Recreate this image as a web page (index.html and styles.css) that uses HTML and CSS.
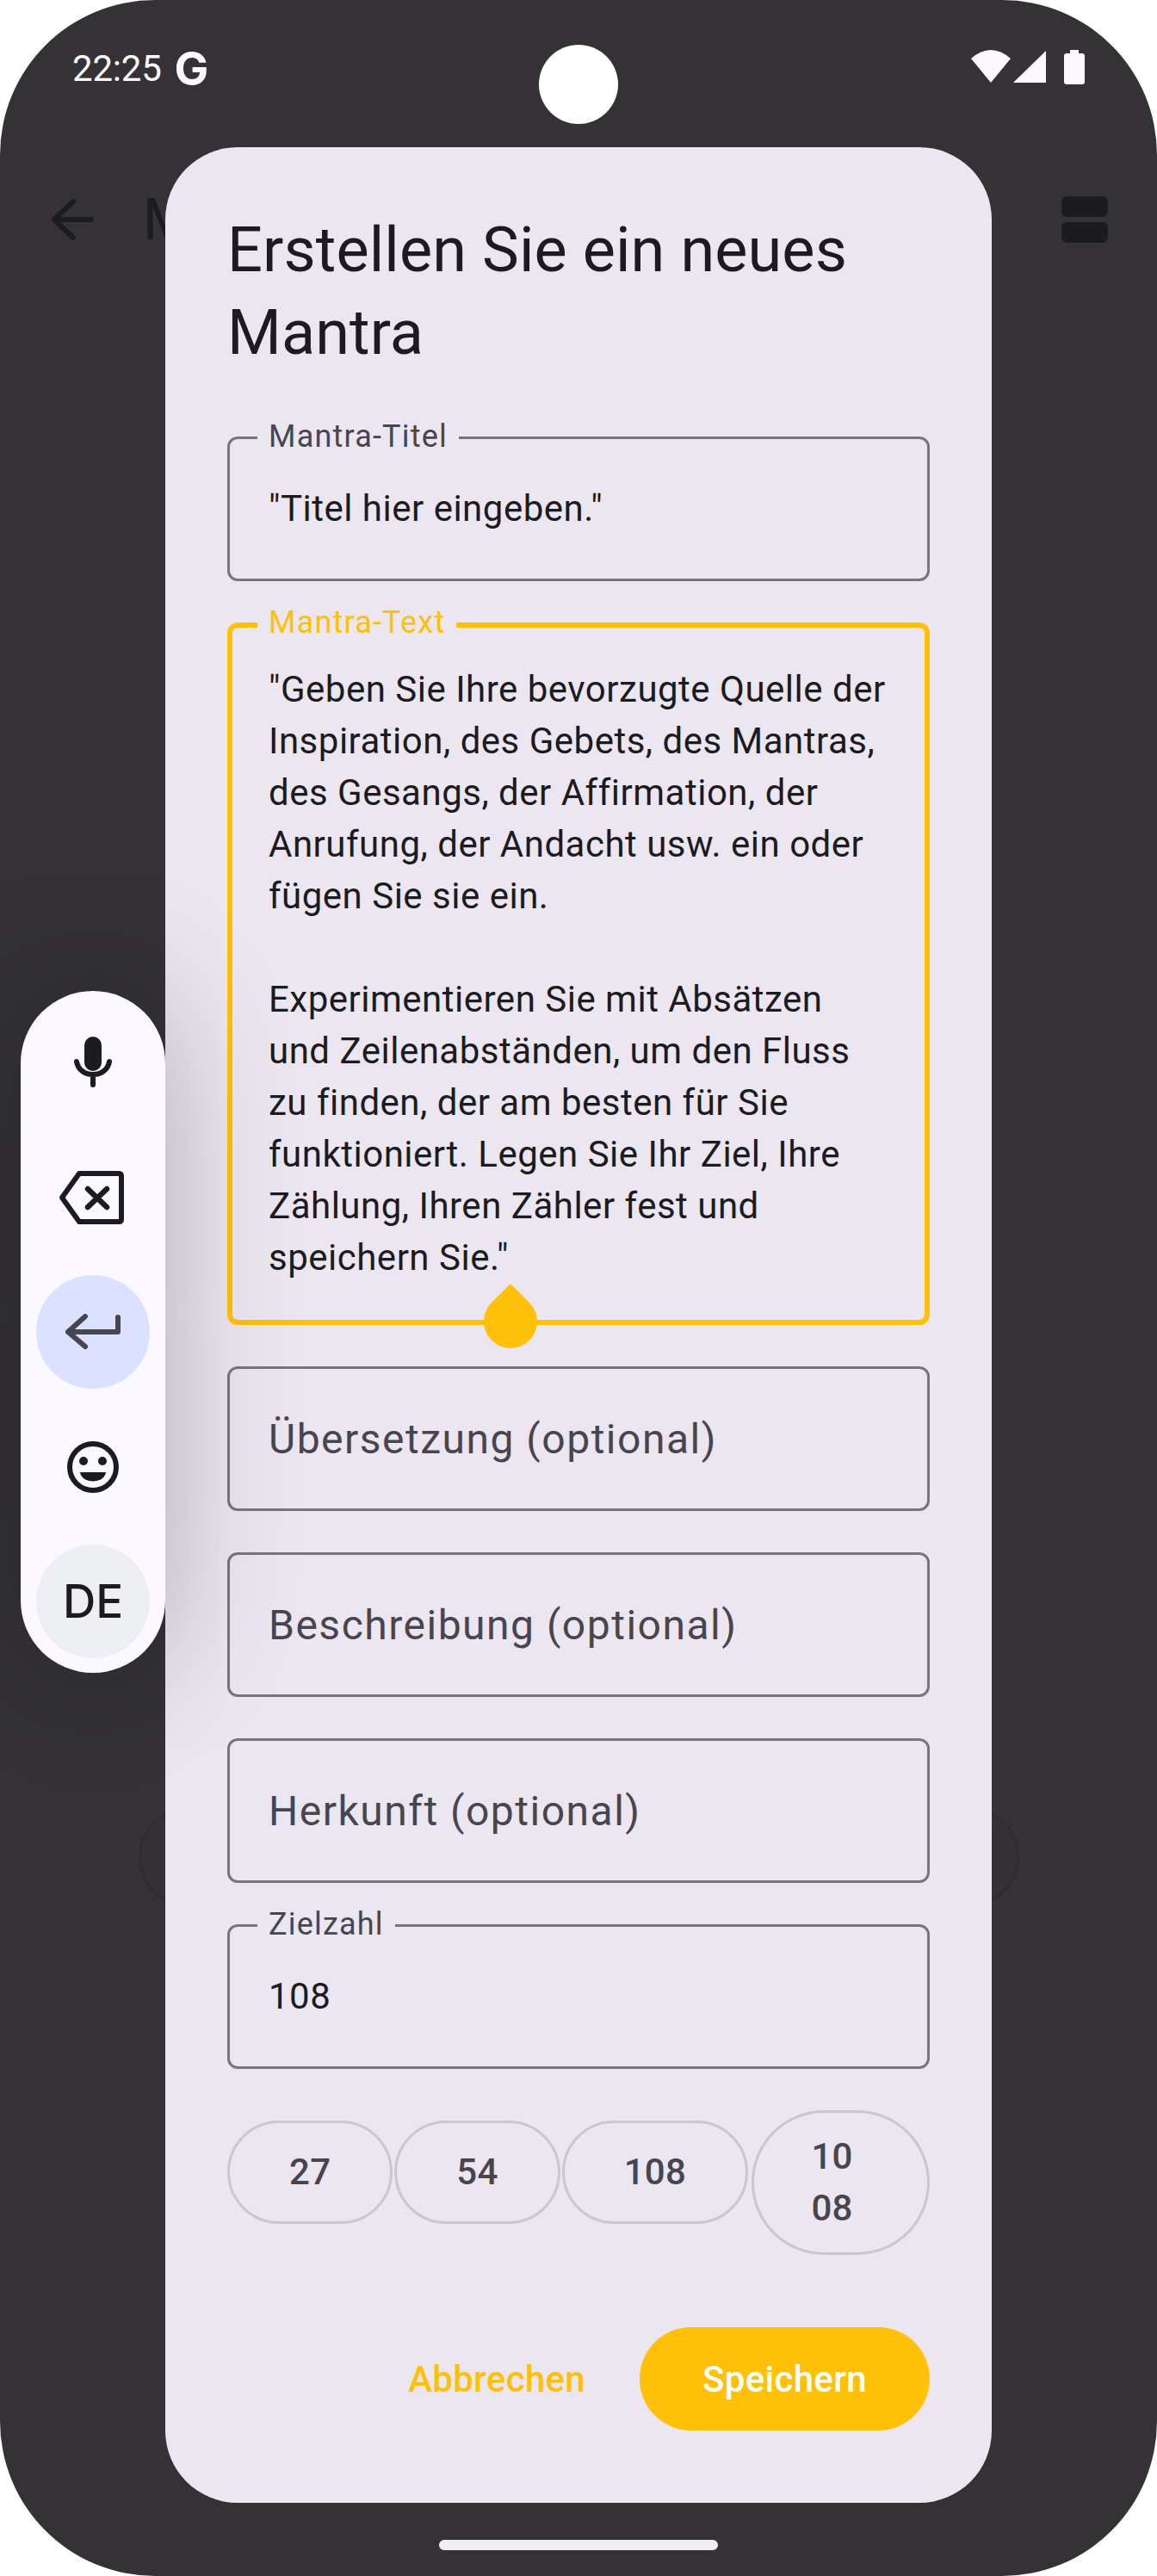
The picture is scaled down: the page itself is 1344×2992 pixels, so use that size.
FILE: index.html
```html
<!DOCTYPE html>
<html lang="de">
<head>
    <meta charset="UTF-8">
    <meta name="viewport" content="width=device-width, initial-scale=1.0">
    <title>Mantra erstellen</title>
    <link rel="stylesheet" href="styles.css">
</head>
<body>
    <div class="phone">
        <div class="status-bar">
            <div class="status-left">
                <span class="clock">22:25</span>
                <span class="g-mark">G</span>
            </div>
            <div class="status-right">
                <svg class="wifi" width="46" height="38" viewBox="0 0 46 38"><path d="M23 38L0 10Q23 -10 46 10Z"/></svg>
                <svg class="signal" width="38" height="38" viewBox="0 0 38 38"><path d="M0 38H38V1Z"/></svg>
                <svg class="battery" width="24" height="40" viewBox="0 0 24 40"><path d="M7 0H17V4H21Q24 4 24 7V37Q24 40 21 40H3Q0 40 0 37V7Q0 4 3 4H7Z"/></svg>
            </div>
        </div>
        <div class="camera"></div>

        <div class="top-bar">
            <svg class="back" width="50" height="48" viewBox="0 0 50 48"><path d="M47 24H4M26 3L4 24L26 45" fill="none" stroke="#1c1b1f" stroke-width="6" stroke-linecap="round" stroke-linejoin="round"/></svg>
            <span class="top-title">M</span>
            <div class="view-toggle">
                <div></div>
                <div></div>
            </div>
        </div>

        <div class="back-pill"></div>

        <div class="dialog">
            <h1>Erstellen Sie ein neues Mantra</h1>
            <div class="form">
                <div class="field">
                    <span class="label">Mantra-Titel</span>
                    <span class="value">"Titel hier eingeben."</span>
                </div>
                <div class="field focused">
                    <span class="label">Mantra-Text</span>
                    <span class="value">"Geben Sie Ihre bevorzugte Quelle der Inspiration, des Gebets, des Mantras, des Gesangs, der Affirmation, der Anrufung, der Andacht usw. ein oder fügen Sie sie ein.<br><br>Experimentieren Sie mit Absätzen und Zeilenabständen, um den Fluss zu finden, der am besten für Sie funktioniert. Legen Sie Ihr Ziel, Ihre Zählung, Ihren Zähler fest und speichern Sie."</span>
                    <svg class="handle" width="62" height="75" viewBox="0 0 62 75"><path d="M31 0L53 22A31 31 0 1 1 9 22Z" fill="#ffc107"/></svg>
                </div>
                <div class="field"><span class="placeholder">Übersetzung (optional)</span></div>
                <div class="field"><span class="placeholder">Beschreibung (optional)</span></div>
                <div class="field"><span class="placeholder">Herkunft (optional)</span></div>
                <div class="field">
                    <span class="label">Zielzahl</span>
                    <span class="value">108</span>
                </div>
                <div class="chips">
                    <div class="chip">27</div>
                    <div class="chip">54</div>
                    <div class="chip">108</div>
                    <div class="chip chip-last">1008</div>
                </div>
            </div>
            <div class="actions">
                <button class="btn-text">Abbrechen</button>
                <button class="btn-save">Speichern</button>
            </div>
        </div>

        <div class="float-keys">
            <div class="key">
                <svg width="44" height="60" viewBox="0 0 44 60"><rect x="12" y="0" width="20" height="40" rx="10" fill="#1c1b1f"/><path d="M3 29C6 49 38 49 41 29M22 44V56" fill="none" stroke="#1c1b1f" stroke-width="6" stroke-linecap="round"/></svg>
            </div>
            <div class="key">
                <svg class="icon-backspace" width="76" height="64" viewBox="0 0 76 64"><path d="M24 4H70Q73 4 73 7V57Q73 60 70 60H24L4 32Z" fill="none" stroke="#1c1b1f" stroke-width="6" stroke-linejoin="round"/><path d="M34 22L56 43M56 22L34 43" fill="none" stroke="#1c1b1f" stroke-width="6.5" stroke-linecap="round"/></svg>
            </div>
            <div class="key key-enter">
                <svg width="66" height="42" viewBox="0 0 66 42"><path d="M4 21H62V4M24 3L4 21L24 38" fill="none" stroke="#49454f" stroke-width="6" stroke-linecap="round" stroke-linejoin="round"/></svg>
            </div>
            <div class="key">
                <svg width="60" height="60" viewBox="0 0 60 60"><circle cx="30" cy="30" r="27" fill="none" stroke="#1c1b1f" stroke-width="6"/><circle cx="19" cy="23" r="5" fill="#1c1b1f"/><circle cx="41" cy="23" r="5" fill="#1c1b1f"/><path d="M15 36H45C43 50 17 50 15 36Z" fill="#1c1b1f"/></svg>
            </div>
            <div class="key key-lang">DE</div>
        </div>

        <div class="home-bar"></div>
    </div>
</body>
</html>
```

FILE: styles.css
```css
:root {
    --scrim: #343235;
    --surface: #ebe6f0;
    --on-surface: #1c1b1f;
    --on-variant: #49454f;
    --outline: #79747e;
    --amber: #ffc107;
}

* {
    box-sizing: border-box;
}

body {
    margin: 0;
    background-color: #fff;
    font-family: Roboto, "Liberation Sans", sans-serif;
}

.phone {
    position: relative;
    width: 1344px;
    height: 2992px;
    overflow: hidden;
    border-radius: 180px;
    background-color: var(--scrim);
}

.status-bar {
    display: flex;
    justify-content: space-between;
    align-items: center;
    height: 80px;
    margin-top: 38px;
    padding: 0 84px;
}

.status-left {
    display: flex;
    align-items: center;
    gap: 15px;
    padding-top: 3px;
    color: #fbf8ff;
}

.clock {
    font-size: 42px;
    line-height: 48px;
    letter-spacing: -0.2px;
}

.g-mark {
    font-family: Inter, Roboto, sans-serif;
    font-size: 53px;
    font-weight: 700;
    line-height: 52px;
}

.status-right {
    display: flex;
    align-items: flex-start;
}

.status-right svg {
    display: block;
    fill: #fbf8ff;
}

.signal {
    margin-left: 3px;
}

.battery {
    margin-left: 21px;
}

.camera {
    position: absolute;
    top: 52px;
    left: 626px;
    width: 92px;
    height: 92px;
    border-radius: 50%;
    background-color: #fff;
}

.top-bar {
    display: flex;
    align-items: center;
    height: 60px;
    margin-top: 107px;
    padding: 0 57px 0 59px;
    color: var(--on-surface);
}

.back {
    flex: none;
}

.top-title {
    flex: 1;
    margin-left: 57px;
    font-size: 66px;
}

.view-toggle {
    display: flex;
    flex-direction: column;
    gap: 6px;
}

.view-toggle div {
    width: 54px;
    height: 24px;
    border-radius: 6px;
    background-color: var(--on-surface);
}

.back-pill {
    position: absolute;
    top: 2100px;
    left: 161px;
    width: 1023px;
    height: 114px;
    border: 3px solid #2f2d30;
    border-radius: 57px;
    background-color: #333134;
}

/* dialog */
.dialog {
    position: absolute;
    top: 171px;
    left: 192px;
    width: 960px;
    height: 2736px;
    padding: 72px;
    border-radius: 84px;
    background-color: var(--surface);
}

h1 {
    margin: 0 0 72px;
    color: var(--on-surface);
    font-size: 72px;
    font-weight: 400;
    line-height: 96px;
    letter-spacing: 0.1px;
}

.form {
    display: flex;
    flex-direction: column;
    gap: 48px;
}

.field {
    position: relative;
    display: flex;
    align-items: center;
    min-height: 168px;
    padding: 0 45px;
    border: 3px solid var(--outline);
    border-radius: 12px;
}

.field.focused {
    padding: 42px;
    border: 6px solid var(--amber);
}

.label {
    position: absolute;
    top: -21px;
    left: 32px;
    padding: 0 13px;
    background-color: var(--surface);
    color: var(--on-variant);
    font-size: 36px;
    line-height: 36px;
    letter-spacing: 1.2px;
}

.focused .label {
    top: -24px;
    left: 29px;
    color: var(--amber);
}

.value {
    color: var(--on-surface);
    font-size: 42px;
    line-height: 60px;
    letter-spacing: 0.5px;
}

.placeholder {
    color: var(--on-variant);
    font-size: 48px;
    letter-spacing: 1.5px;
}

.handle {
    position: absolute;
    left: 292px;
    bottom: -33px;
}

.chips {
    display: flex;
    align-items: flex-start;
    gap: 2px;
}

.chip {
    display: flex;
    align-items: center;
    justify-content: center;
    min-height: 120px;
    margin-top: 12px;
    padding: 21px 69px;
    border: 3px solid #cbc6cf;
    border-radius: 999px;
    color: var(--on-variant);
    font-size: 42px;
    font-weight: 500;
    line-height: 60px;
    letter-spacing: 0.3px;
}

.chip-last {
    flex: 1;
    min-width: 0;
    margin-top: 0;
    margin-left: 2px;
    padding: 21px 79px 21px 59px;
    text-align: center;
    word-break: break-all;
}

.actions {
    display: flex;
    justify-content: flex-end;
    align-items: center;
    gap: 27px;
    margin-top: 84px;
}

.actions button {
    height: 120px;
    border: none;
    border-radius: 60px;
    font-family: inherit;
    font-size: 42px;
    font-weight: 500;
    letter-spacing: 0.3px;
}

.btn-text {
    padding: 0 36px;
    background: none;
    color: var(--amber);
}

.btn-save {
    width: 337px;
    padding: 0;
    background-color: var(--amber);
    color: #fff;
}

/* floating keyboard keys */
.float-keys {
    position: absolute;
    top: 1151px;
    left: 24px;
    display: flex;
    flex-direction: column;
    align-items: center;
    width: 168px;
    height: 792px;
    padding: 17px 0;
    border-radius: 84px;
    background-color: #fbf8ff;
    box-shadow: 0 0 150px rgba(0, 0, 0, 0.25);
}

.key {
    display: flex;
    align-items: center;
    justify-content: center;
    flex: none;
    width: 132px;
    height: 132px;
    margin-bottom: 24.5px;
    border-radius: 50%;
    color: var(--on-surface);
}

.key:last-child {
    margin-bottom: 0;
}

.icon-backspace {
    margin-right: 4px;
}

.key-enter {
    background-color: #dae2ff;
}

.key-lang {
    background-color: #eeeff3;
    font-family: Inter, Roboto, sans-serif;
    font-size: 53px;
    font-weight: 500;
    line-height: 132px;
}

.home-bar {
    position: absolute;
    top: 2950px;
    left: 510px;
    width: 324px;
    height: 12px;
    border-radius: 6px;
    background-color: #eeedf2;
}
```
